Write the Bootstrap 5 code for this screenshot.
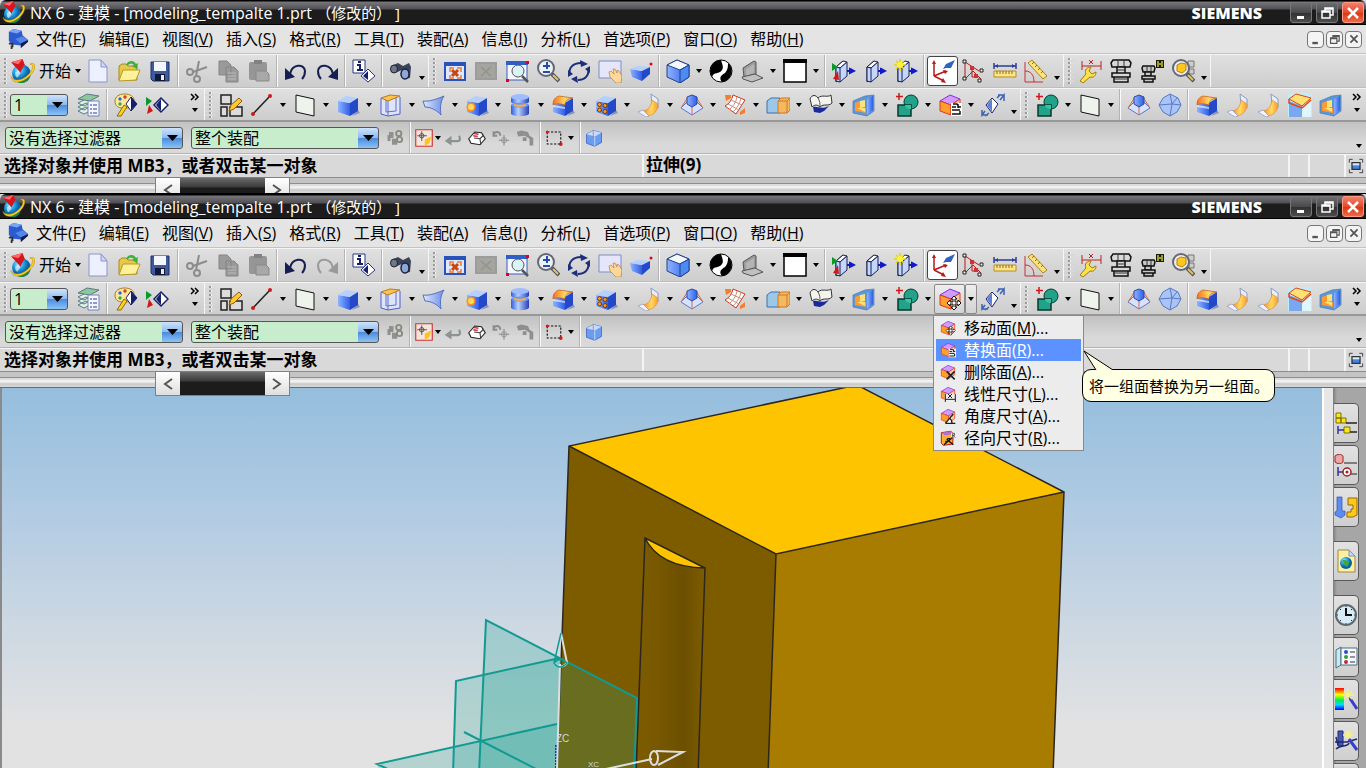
<!DOCTYPE html>
<html lang="zh-CN">
<head>
<meta charset="utf-8">
<meta name="viewport" content="width=device-width, initial-scale=1">
<title>NX 6 - 建模</title>
<link rel="stylesheet" href="https://cdn.jsdelivr.net/npm/bootstrap@5.3.0/dist/css/bootstrap.min.css">
<style>
body{font:16px/20px "Open Sans","Noto Sans CJK SC",sans-serif;color:#000;background:#d6d6d6;overflow-x:hidden}
button{font:inherit;color:inherit;border:0;background:none;padding:0}
.titlebar{height:25px;padding:0 2px 0 2px;color:#fff;background:linear-gradient(#000 0 1px,#77777b 2px,#505054 9px,#1c1c1c 10px,#1c1c1c 24px,#000 24px);border-radius:6px 6px 0 0}
.titlebar .doc{font-size:16px;margin-left:5px}
.titlebar .doc span{font-size:15px}
.maker{font:800 16px/20px "Open Sans",sans-serif;margin-right:24px}
.winbtn{width:22px;height:21px;margin-left:4px;border:1px solid #77777a;border-radius:3px;background:linear-gradient(#6c6c70,#4a4a4c 50%,#303032 51%,#4c4c4c)}
.winbtn.shut{border-color:#ff9a86;background:linear-gradient(#f0806a,#e4492c 50%,#d8350f 51%,#ee6a46)}
.menubar{height:29px;padding-left:7px;background:#e4e4e4;border-bottom:1px solid #c2c2c2}
.menubar a{color:#000;text-decoration:none;padding:0 6px 0 7px;white-space:nowrap}
.mdi{width:17px;height:17px;margin-left:2px;border:1px solid #777;border-radius:4px;background:#f4f4f4;color:#555}
.grip{width:10px;height:26px;flex:none;background:linear-gradient(transparent 50%,#d8d8d8 50%) 0 0/10px 4px,linear-gradient(90deg,transparent 4px,#9a9a9a 4px 6px,#f4f4f4 6px 7px,transparent 7px)}
.tools{height:34px;border-top:1px solid #f4f4f4;border-bottom:1px solid #bdbdbd;background:linear-gradient(#e0e0e0,#cdcdcd)}
.tools.second{border-bottom:2px solid #989898}
.tgroup{height:100%;flex:none}
.tgroup.ends{border-right:1px solid #f6f6f6}
.tb{width:31px;height:30px;flex:none}
.tb svg{display:block}
.tb.on{background:#fff;border:1px solid #444;border-radius:3px}
.tb.hot,.dd.hot{border:1px solid #8a8a8a;border-radius:2px;background:linear-gradient(#eee,#d2d2d2)}
.dd,.more{width:12px;height:30px;flex:none}
.more{padding-top:14px}
.rule{width:2px;height:100%;margin:0 2px;flex:none;background:linear-gradient(90deg,#b4b4b4 50%,#fafafa 50%)}
.starter{width:72px;white-space:nowrap}
.combo{height:22px;padding:0 24px 0 3px;border:1px solid #555;border-radius:3px;font:inherit;line-height:18px;color:#000;appearance:none;
 background:url("data:image/svg+xml,%3Csvg xmlns='http://www.w3.org/2000/svg' width='20' height='20'%3E%3Cpath d='M5 7h11l-5.500 6z'/%3E%3C/svg%3E") right 0 top 0/20px 20px no-repeat,linear-gradient(#cfe3fa,#8ab9ee 50%,#4a8ade 51%,#8cc4f6) right/20px 100% no-repeat,#c7edcc}
.combo.layer{width:58px;margin-right:5px}
.combo.filter{width:178px;margin:0 8px 0 5px}
.combo.scope{width:188px;margin-right:4px}
.overspace{margin-left:18px}
.selbar{height:32px;background:linear-gradient(#c2c2c2,#d9d9d9 70%);border-bottom:1px solid #b4b4b4}
.tb.mini{width:22px}.tb.mid{width:24px}
.dd.tight{width:6px}
.prompt{height:23px;font-weight:700;font-size:17px;border-top:1px solid #f6f6f6;background:#d9d9d9}
.prompt .cue{width:47%;padding-left:4px;white-space:nowrap}
.prompt .state{border-left:2px solid #f4f4f4;padding-left:2px}
.prompt .cell{border-left:2px solid #f4f4f4;height:100%}
.c20{width:20px}.c36{width:36px}.c22{width:22px}
.dock{height:16px;border-top:1px solid #8c8c8c;background:linear-gradient(#c4c4c4 0 5px,#8e8e8e 5px 6px,#dcdcdc 6px 8px,#f0f0f0 8px 10px,#c4c4c4 12px,#d4d4d4 13px);position:relative}
.dock .pager{position:absolute;left:155px;top:-1px;width:135px;height:25px;z-index:2;border:1px solid #808080;background:#1c1c1c}
.pager .track{background:linear-gradient(#6a6a6a,#3a3a3a 9px,#1c1c1c 10px)}
.pager button{width:24px;height:23px;background:linear-gradient(#fff,#dedede)}
.nxwin.back{height:194px;overflow:hidden;border-bottom:1px solid #000}
.edge{border-top:1px solid #6c6c6c}
.facemenu{display:block;width:151px;left:-1px;top:31px;padding:1px 2px;border:1px solid #8a8a8a;border-radius:0;background:#ececec;color:#000;font-size:16px;z-index:5;min-width:0}
.facemenu .dropdown-item{height:22px;padding:0 4px;color:#000;line-height:22px;font-size:16px}
.facemenu .dropdown-item.active{background:#5b92ff;color:#fff}
.tip{left:1082px;top:349px;width:193px;z-index:6}
.tip svg{display:block;margin-bottom:-1px}
.tip .bubble{height:33px;padding:0 6px;font-size:15px;line-height:32px;border:1px solid #000;border-radius:9px;background:#ffffe4;white-space:nowrap}
.tip .tail{position:relative;z-index:1}
.scene{border-left:2px solid #8a8a8a;background:linear-gradient(#95bedd,#b3cce3 35%,#cfd9e2 65%,#e2e2e2 90%);min-width:0}
.splitter{width:11px;border-left:2px solid #fff;background:#e6e6e6;flex:none}
.sidebar{width:33px;flex:none;background:linear-gradient(90deg,#7c7c7c,#a6a6a6 4px);padding:15px 7px 0 1px;gap:2px;overflow:hidden}
.sidebar button{height:40px;flex:none;border:1px solid #5a5a5a;border-left:0;border-radius:0 5px 5px 0;background:linear-gradient(#e2e2e2,#cfcfcf)}
.sidebar .gap-above{margin-top:12px}
.sidebar button:last-child{height:auto;flex:1 1 0;min-height:0;border-bottom:0;border-radius:0 5px 0 0;padding:0}
</style>
</head>
<body>
<svg width="0" height="0" class="position-absolute" aria-hidden="true">
<defs>
<linearGradient id="gb"><stop stop-color="#8db4ff"/><stop offset="1" stop-color="#2f5ee6"/></linearGradient>
<linearGradient id="gc"><stop stop-color="#2f5ee0"/><stop offset=".4" stop-color="#b8d2ff"/><stop offset="1" stop-color="#2440b8"/></linearGradient>
<linearGradient id="go"><stop stop-color="#ff6a20"/><stop offset=".6" stop-color="#ffdc60"/><stop offset="1" stop-color="#ff9a30"/></linearGradient>
<linearGradient id="gs"><stop stop-color="#dfe8ff"/><stop offset="1" stop-color="#6b8de8"/></linearGradient>
<radialGradient id="gg" cx=".35" cy=".3"><stop stop-color="#b4f2ff"/><stop offset=".5" stop-color="#2aa8ea"/><stop offset="1" stop-color="#0b62a8"/></radialGradient>
<linearGradient id="rain" x2="0" y2="1"><stop stop-color="red"/><stop offset=".3" stop-color="#ff0"/><stop offset=".55" stop-color="#0e4"/><stop offset=".75" stop-color="#0df"/><stop offset="1" stop-color="#00f"/></linearGradient>
<linearGradient id="slot"><stop stop-color="#7d5c00"/><stop offset=".3" stop-color="#785800"/><stop offset=".7" stop-color="#6c5000"/><stop offset="1" stop-color="#7d5c00"/></linearGradient>
<g id="cb"><path d="M16 23l8-3-2-3z" fill="#8a97b8"/><path d="M2 8l12 2v13L2 19z" fill="url(#gb)"/><path d="M2 8l8-5 12 2-8 5z" fill="#b4d0ff"/><path d="M14 10l8-5v13l-8 5z" fill="#2449c8"/></g>
<g id="door"><path d="M4 8l7-6v15l-7 6z" fill="#a9c2ff" stroke="#16204a"/><path d="M4 8l7-6 4 1-7 6z" fill="#fff" stroke="#16204a"/><path d="M8 9l7-6v14l-7 6-4-1V8z" fill="#c4d6ff" stroke="#16204a"/><path d="M8 9v14" stroke="#16204a"/><path d="M15 12h5m-2-2l4 2-4 2z" fill="#1018c8" stroke="#1018c8" stroke-width="2"/></g>
<g id="mfc"><path d="M2 8l10-6 10 4-9 6z" fill="#cf9cff" stroke="#8a2be2"/><path d="M2 8l11 4v10L2 18z" fill="#ffa02a" stroke="#e0361c"/><path d="M13 12l9-6v10l-9 6z" fill="#ffc9a0" stroke="#e0361c"/></g>
<g id="lens"><circle cx="10" cy="9" r="8" fill="#e9f1f4" stroke="#667" stroke-width="2"/><path d="M16 15l7 7" stroke="#555" stroke-width="4"/><path d="M17 16l5 5" stroke="#ddc46a" stroke-width="2"/></g>
</defs>
<symbol id="nx" viewBox="0 0 24 24"><circle cx="11" cy="14" r="9" fill="url(#gg)"/><path d="M3 19c4 5 12 6 16-1-5 3-11 3-16 1z" fill="#1c8a3c"/><path d="M1 17c3 6 14 3 19-5 3-5 2-7-1-7 6-3 6 4 2 9-6 8-18 12-20 3z" fill="#ffd21c" stroke="#b88400" stroke-width=".5"/><path d="M1 3l11-3 2 5-4 8z" fill="#d8141c"/><path d="M1 3l11-3-4 5z" fill="#ff6a6a"/><path d="M5 13l3-2 2 3-3 4c-2-1-2-3-2-5z" fill="#fff" opacity=".6"/></symbol>
<symbol id="part" viewBox="0 0 24 24"><path d="M2 4l5-3 9 2 1 5 6 5-8 6-10-1-3-4z" fill="#2a5bd0"/><path d="M2 4l5-3 9 2-5 3z" fill="#7aa4f4"/><path d="M9 12l8-3 6 4-8 4z" fill="#5686e8"/><path d="M23 13v2l-8 7v-5z" fill="#101c44"/><path d="M2 17h4v3H5v3" fill="none" stroke="#333" stroke-width="2"/></symbol>
<symbol id="new" viewBox="0 0 24 24"><path d="M3 1h12l6 7v15H3z" fill="#edf0ff" stroke="#8a96cc"/><path d="M15 1v7h6z" fill="#cfd6fa" stroke="#8a96cc"/></symbol>
<symbol id="open" viewBox="0 0 24 24"><path d="M2 7l3-2h4l2 2h9v14H2z" fill="#e8c848" stroke="#a88a20"/><path d="M2 22l4-11h17l-4 10z" fill="#fff19a" stroke="#b89a28"/><path d="M9 6c2-5 8-5 10-1l2-1-1 6-5-3 2-1c-2-2-4-2-6 0z" fill="#3fae3a"/></symbol>
<symbol id="save" viewBox="0 0 24 24"><path d="M3 3h18v19H5l-2-2z" fill="#3c5a9c" stroke="#1e2f66"/><path d="M6 3h12v9H6z" fill="#f4f6ff"/><path d="M7 15h10v7H7z" fill="#11183a"/><path d="M13 16h3v5h-3z" fill="#e8ecff"/></symbol>
<symbol id="cut" viewBox="0 0 24 24"><g fill="none" stroke="#8c8c8c" stroke-width="2"><circle cx="5" cy="13" r="3"/><circle cx="12" cy="20" r="3"/><path d="M8 13l14-5M11 17l3-15"/></g></symbol>
<symbol id="copy" viewBox="0 0 24 24"><path d="M3 2h8l4 4v10H3zM10 8h8l4 4v11H10z" fill="#9a9a9a" stroke="#858585"/><path d="M12 14h8M12 17h8M12 20h8" stroke="#bbb"/></symbol>
<symbol id="paste" viewBox="0 0 24 24"><rect x="2" y="3" width="18" height="18" rx="2" fill="#969696"/><path d="M7 1h8v4H7z" fill="#828282"/><path d="M9 12h10l3 3v7H9z" fill="#a8a8a8" stroke="#888"/></symbol>
<symbol id="undo" viewBox="0 0 24 24"><path d="M6 15c2-10 14-11 15-3 0 3-1 6-3 8" fill="none" stroke="#171e52" stroke-width="2"/><path d="M1 9v12l10-3z" fill="#171e52"/></symbol>
<symbol id="redo" viewBox="0 0 24 24"><path d="M18 15C16 5 4 4 3 12c0 3 1 6 3 8" fill="none" stroke="#171e52" stroke-width="2"/><path d="M23 9v12l-10-3z" fill="#171e52"/></symbol>
<symbol id="redog" viewBox="0 0 24 24"><path d="M18 15C16 5 4 4 3 12c0 3 1 6 3 8" fill="none" stroke="#9a9a9a" stroke-width="2"/><path d="M23 9v12l-10-3z" fill="#9a9a9a"/></symbol>
<symbol id="info" viewBox="0 0 24 24"><path d="M1 1h12v13H1z" fill="#fff" stroke="#2a3480"/><path d="M5 6h3v5m-3 0h6M6 3h3" fill="none" stroke="#16206a" stroke-width="2"/><path d="M16 10l7 7-7 6-7-6z" fill="#fff" stroke="#2a3480"/><path d="M16 12v9l-5-4z" fill="#16206a"/></symbol>
<symbol id="binoc" viewBox="0 0 24 24"><path d="M2 7l7-3 5 3 6-3 2 4-1 11-6 1-2-9-7 3-4-2z" fill="#3a4358"/><ellipse cx="5" cy="10" rx="3.500" ry="4" fill="#6d7890" stroke="#222"/><ellipse cx="16" cy="15" rx="4" ry="5" fill="#8fa6d8" stroke="#1a2240" stroke-width="1.500"/></symbol>
<symbol id="fit" viewBox="0 0 24 24"><path d="M2 4h20v17H2z" fill="#dfe8ff" stroke="#2a52b8" stroke-width="2"/><path d="M1 3h22v4H1z" fill="#2a52b8"/><path d="M9 11l6 6m0-6l-6 6" stroke="#c8460a" stroke-width="3"/><path d="M7 13V9h4m3 0h4v4m0 3v3h-4m-3 0H7v-3" fill="none" stroke="#f07a30" stroke-width="1.500"/></symbol>
<symbol id="fitg" viewBox="0 0 24 24"><path d="M1 3h22v18H1z" fill="#9c9c9c"/><path d="M3 5h18v14H3z" fill="#a4a4a0"/><path d="M7 8l10 9m0-9L7 17" stroke="#94948a" stroke-width="1.500"/></symbol>
<symbol id="zoomw" viewBox="0 0 24 24"><path d="M2 3h20v18H2z" fill="#f4f7ff" stroke="#3a5cb8"/><path d="M1 2h22v4H1z" fill="#2f5ec8"/><circle cx="13" cy="12" r="6" fill="#d9f3f6" stroke="#555"/><path d="M17 17l6 6" stroke="#555" stroke-width="2.500"/><path d="M1 20h3v3H1zM21 2h3v3h-3z" fill="#d02"/></symbol>
<symbol id="zoompm" viewBox="0 0 24 24"><use href="#lens"/><path d="M7 7h7m-3-4v7m-4 3h7" stroke="#2a4aa8" stroke-width="2"/></symbol>
<symbol id="rotate" viewBox="0 0 24 24"><path d="M3 16C1 9 6 4 14 4M21 9c2 7-3 12-10 12" fill="none" stroke="#1d2e7c" stroke-width="2"/><path d="M13 1l8 4-7 3zM11 24l-7-4 6-3z" fill="#1d2e7c"/><path d="M1 11l0 7 5-3zM23 14l0-7-5 3z" fill="#1d2e7c"/></symbol>
<symbol id="pan" viewBox="0 0 24 24"><path d="M1 2h22v17H1z" fill="#e6e6fa" stroke="#7d8ccc"/><path d="M11 13l2-1 3 3-1-5h2l2 4v-3l2 1 3 5-1 7h-5l-6-6z" fill="#ffd79a" stroke="#b8803a" stroke-width=".7"/></symbol>
<symbol id="persp" viewBox="0 0 24 24"><path d="M1 10l12 2v10L3 18z" fill="url(#gb)"/><path d="M1 10l8-3 12 1-8 4z" fill="#b4d0ff"/><path d="M13 12l8-4v7l-8 7z" fill="#2449c8"/><circle cx="22" cy="5" r="1.500" fill="#d02"/></symbol>
<symbol id="shaded" viewBox="0 0 24 24"><path d="M1 6L11 1l12 5v12l-9 6L1 18z" fill="url(#gb)" stroke="#24408c"/><path d="M1 6L11 1l12 5-9 5z" fill="#f4f8ff" stroke="#24408c"/><path d="M14 11l9-5v12l-9 6z" fill="#4a8cf4" stroke="#24408c"/></symbol>
<symbol id="yin" viewBox="0 0 24 24"><circle cx="12" cy="12" r="11" fill="#fff" stroke="#000"/><path d="M12 1a11 11 0 0 0-9 17c2-6 7-2 10-7 2-3 0-6-1-10z"/><path d="M13 23c-4-5 0-7 3-9 3-3 3-7 3-10a11 11 0 0 1-6 19z"/></symbol>
<symbol id="laptop" viewBox="0 0 24 24"><path d="M3 9l11-7 2 1v12L4 18z" fill="#9c9c9c" stroke="#555"/><path d="M6 10l8-5v9l-8 3z" fill="#b4b4b4"/><path d="M2 18l13-3 8 4-11 4-9-3z" fill="#c0c0c0" stroke="#555"/></symbol>
<symbol id="bgbox" viewBox="0 0 24 24"><path d="M1 1h22v22H1z" fill="#fff" stroke="#000" stroke-width="1.500"/><path d="M0 0h24v4H0z"/></symbol>
<symbol id="clipa" viewBox="0 0 24 24"><use href="#door"/><path d="M0 4l6 4-6 4z" fill="#0a9a28"/><path d="M1 20l5-8 1 9z" fill="#d01818"/></symbol>
<symbol id="clipb" viewBox="0 0 24 24"><use href="#door"/></symbol>
<symbol id="clipc" viewBox="0 0 24 24"><use href="#door"/><path d="M6 0v12M0 6h12M2 2l8 8m0-8l-8 8" stroke="#e8d400" stroke-width="1.500"/><circle cx="6" cy="6" r="3" fill="#fff23a"/></symbol>
<symbol id="wcs" viewBox="0 0 24 24"><path d="M3 4v13m0 0l12-5M3 17l10 5" fill="none" stroke="#b81818" stroke-width="1.500"/><path d="M3 1l-2 4h4zM17 12l-5-1 2 4zM15 24l-5-1 2-4z" fill="#b81818"/><path d="M12 10l3-5 9-4-4 8-5 0z" fill="#2f63c0"/></symbol>
<symbol id="asm" viewBox="0 0 24 24"><path d="M3 2v19M3 3l14 9M3 20l8-8 8 8M10 8v10h6" fill="none" stroke="#b81818"/><path d="M8 7h4v4H8zM12 15h4v4h-4z" fill="#c33"/><g fill="#eee" stroke="#222"><path d="M1 1h3v3H1zM1 18h3v3H1zM18 10h3v3h-3zM16 20h3v3h-3z"/></g></symbol>
<symbol id="ruler" viewBox="0 0 24 24"><path d="M1 7h22M1 4v6M23 4v6" stroke="#2a3c9c" stroke-width="1.500"/><path d="M5 5L2 7l3 2zM19 5l3 2-3 2z" fill="#2a3c9c"/><path d="M1 12h22v6H1z" fill="#ffe68a" stroke="#b88c20"/><path d="M4 12v3m3-3v3m3-3v3m3-3v3m3-3v3m3-3v3" stroke="#8a6a10"/></symbol>
<symbol id="angle" viewBox="0 0 24 24"><path d="M1 3v20h18M1 12c6 0 9 4 9 11" fill="none" stroke="#c83030"/><path d="M4 4l4-3 15 16-4 3z" fill="#ffe27a" stroke="#a88420"/><path d="M8 5l2-2m1 5l2-2m1 5l2-2m1 5l2-2" stroke="#8a6a10"/></symbol>
<symbol id="wrench" viewBox="0 0 24 24"><path d="M4 7h19M4 2v9M23 2v9M11 1l4 4m0-4l-4 4" stroke="#c02020"/><path d="M2 22l6-7c-2-4 1-7 5-7l-2 4 3 3 4-2c0 4-3 6-6 5l-7 6z" fill="#ffe14a" stroke="#9c7c10"/></symbol>
<symbol id="bolt" viewBox="0 0 24 24"><g fill="#d8d8d8" stroke="#111" stroke-width="1.500"><path d="M4 1h16l2 3-1 4H3L2 4z"/><path d="M8 8h8v7H8z"/><path d="M3 14h18v4H3zM5 18h14v5H5z"/></g><path d="M9 1v7m6-7v7M8 11h8M5 20h14" stroke="#333"/></symbol>
<symbol id="bolth" viewBox="0 0 24 24"><g fill="#c8c8c8" stroke="#111" stroke-width="1.500"><path d="M3 7h11l1 2-1 4H3L2 9z"/><path d="M5 13h6v4H5z"/><path d="M2 17h13v3H2zM4 20h9v3H4z"/></g><path d="M7 7v6m4-6v6" stroke="#333"/><path d="M16 1h8v8h-8z" fill="#1c1c00"/><path d="M17 2h2v2h2V2h2v6h-2V6h-2v2h-2z" fill="#9c9c30"/></symbol>
<symbol id="reuse" viewBox="0 0 24 24"><path d="M17 2h6v6h-6zM18 10h5v5h-5z" fill="#ccc" stroke="#777"/><use href="#lens"/><path d="M6 6l4-2 5 1v6l-4 3-5-2z" fill="#ffc820" stroke="#c08000"/></symbol>
<symbol id="layers" viewBox="0 0 24 24"><g fill="#dff3e4" stroke="#5a7a86"><path d="M1 18l8-4 6 3-8 4zM1 14l8-4 6 3-8 4zM1 10l8-4 6 3-8 4z"/><path d="M1 6l9-5 12 2-9 5z" fill="#8cc89a"/></g><path d="M11 8h11v15H11z" fill="#f4f6ff" stroke="#7684b8"/><path d="M13 12h2m1 0h4m-7 4h2m1 0h4m-7 4h2m1 0h4" stroke="#6a7cc0" stroke-width="1.500"/></symbol>
<symbol id="palette" viewBox="0 0 24 24"><path d="M1 8c0-9 17-9 19-2 0 4-6 2-6 5 2 4-2 5-5 4-5 0-8-2-8-7z" fill="#ffe89a" stroke="#a87a20"/><circle cx="6" cy="6" r="1.700" fill="#2a6ad8"/><circle cx="11" cy="4" r="1.700" fill="#d83a2a"/><circle cx="6" cy="11" r="1.700" fill="#3aa84a"/><path d="M3 23l7-11 3 2-6 9z" fill="#ffd21c" stroke="#8a6a10"/><path d="M17 4l6 7-6 7-5-7z" fill="#fff" stroke="#16206a"/><path d="M17 4v14l6-7z" fill="#16206a"/></symbol>
<symbol id="flip" viewBox="0 0 24 24"><path d="M1 4l6 4-6 5z" fill="#0a9a28"/><path d="M2 21l2-9 4 6z" fill="#d01818"/><path d="M16 5l7 7-7 7-7-7z" fill="#fff" stroke="#16206a" stroke-width="1.500"/><path d="M16 6v12l-5-6z" fill="#16206a"/></symbol>
<symbol id="sketch" viewBox="0 0 24 24"><path d="M2 2h10v9H2zM2 14h6v9H2zM11 14h12v9H11z" fill="#dcdcdc" stroke="#222" stroke-width="1.500"/><path d="M10 18l2-6 8-7 3 3-8 8z" fill="#ffca28" stroke="#8a5a10"/></symbol>
<symbol id="line" viewBox="0 0 24 24"><path d="M3 21L20 3" stroke="#222" stroke-width="1.500"/><circle cx="3" cy="21" r="2" fill="#d01818"/><circle cx="20" cy="3" r="2" fill="#d01818"/></symbol>
<symbol id="datum" viewBox="0 0 24 24"><path d="M3 2l18 4v17L3 19z" fill="#eef4ec" stroke="#111"/></symbol>
<symbol id="cube" viewBox="0 0 24 24"><use href="#cb"/></symbol>
<symbol id="extr" viewBox="0 0 24 24"><path d="M2 5v16l7 2 12-2V4" fill="#dfe4fa" stroke="#4a62c8"/><path d="M9 8v15M7 5v14l10-1V3" fill="none" stroke="#5a72cc"/><path d="M2 5l9-3 10 1-12 5z" fill="#ffc24a" stroke="#b87a20"/></symbol>
<symbol id="sheet" viewBox="0 0 24 24"><path d="M1 8c6 1 14-2 21-5-4 6-4 13-3 19-4-5-11-8-16-8z" fill="url(#gs)" stroke="#5470c0"/></symbol>
<symbol id="hole" viewBox="0 0 24 24"><use href="#cb"/><circle cx="6" cy="14" r="4.500" fill="#ff8a20"/><circle cx="6" cy="14" r="3" fill="#ffdc5a"/></symbol>
<symbol id="cyl" viewBox="0 0 24 24"><path d="M3 4v5c2 3 16 3 18 0V4zM3 12v9c3 3 15 3 18 0v-9z" fill="url(#gc)"/><ellipse cx="12" cy="4" rx="9" ry="3" fill="#9fbcff"/><ellipse cx="12" cy="12" rx="9" ry="2.500" fill="#6f94f4"/><path d="M6 11c3 1 9 1 12 0v2c-3 1-9 1-12 0z" fill="#ffb030"/></symbol>
<symbol id="blend" viewBox="0 0 24 24"><use href="#cb"/><path d="M2 12c0-6 3-8 6-9l14 2c-6 1-8 3-8 7-3-1-9-2-12 0z" fill="url(#go)" stroke="#c06010" stroke-width=".7"/><path d="M2 12l12 2v2L2 14z" fill="#fff" opacity=".6"/></symbol>
<symbol id="pattern" viewBox="0 0 24 24"><use href="#cb"/><g fill="#ff9a20" stroke="#7a3800"><circle cx="5.500" cy="11.500" r="2"/><circle cx="11" cy="12.500" r="2"/><circle cx="5.500" cy="17" r="2"/><circle cx="11" cy="18.500" r="2"/></g></symbol>
<symbol id="bend" viewBox="0 0 24 24"><path d="M14 1l7 5v9l-6-3z" fill="#e8eefc" stroke="#8a9ac8"/><path d="M4 18c6 0 10-3 11-11l6 4c0 7-4 11-11 12z" fill="url(#go)" stroke="#d89040" stroke-width=".7"/><path d="M1 19l5-2 6 6-3 1z" fill="#eef2ff" stroke="#8a9ac8" stroke-width=".7"/></symbol>
<symbol id="draft" viewBox="0 0 24 24"><path d="M1 15l6-6h10l6 6-11 7z" fill="#d6e2ff" stroke="#5a78c8"/><path d="M1 15L8 4M23 15L16 4M12 22V12" stroke="#e0683a"/><path d="M7 4l5-2 5 2v7l-5 3-5-3z" fill="url(#gb)" stroke="#2a48a8"/></symbol>
<symbol id="mesh" viewBox="0 0 24 24"><path d="M10 2l12 5-9 14L2 13c4-2 7-6 8-11z" fill="#fff" stroke="#c83820"/><path d="M14 4c-1 6-4 9-8 13M18 5c-1 6-4 10-8 14M8 7l11 5M5 11l11 6" fill="none" stroke="#c89080"/><path d="M2 2h6v3L3 8zM17 19l5-4v5l-5 2z" fill="#f08030"/></symbol>
<symbol id="trim" viewBox="0 0 24 24"><path d="M1 8l4-3h9v15H1z" fill="#9cc8e8" stroke="#3a72b0"/><path d="M12 8l3-3h9v12l-3 3h-9z" fill="#f4b860" stroke="#d07820"/><path d="M12 8h9v12M21 8l3-3" fill="none" stroke="#d07820"/></symbol>
<symbol id="sew" viewBox="0 0 24 24"><path d="M1 6c2-5 6-4 8-1 4-4 9 0 13-3l1 8c-4 4-8 0-12 4-3-3-6-2-8 0z" fill="#f4f4ee" stroke="#333"/><path d="M4 14c5-1 8 3 16-1l-5 5-4 2-6-1z" fill="#1a2a9c"/><path d="M9 5c2 3 2 6 2 9" fill="none" stroke="#555"/></symbol>
<symbol id="shell" viewBox="0 0 24 24"><path d="M1 8l12-5 9-1v16l-7 5-14-3z" fill="#5a98d8" stroke="#4a78b0" stroke-width=".7"/><path d="M3 10l5-2v6l6 1v5L3 18z" fill="#ff9a30"/><path d="M8 8l5-1v7l-5 1zM5 15h8v4z" fill="#ffe27a"/><path d="M15 6l6-3v14l-6 5z" fill="url(#gb)"/></symbol>
<symbol id="union" viewBox="0 0 24 24"><circle cx="16" cy="9" r="7" fill="#22a288" stroke="#063a2e"/><path d="M3 12h13v11H3z" fill="#22a288" stroke="#063a2e" stroke-width="1.500"/><path d="M10 12h6v4c-4 0-6-2-6-4z" fill="#3ac0a4"/><path d="M4 0v7M1 3.500h7" stroke="#d01818" stroke-width="1.500"/></symbol>
<symbol id="facer" viewBox="0 0 24 24"><use href="#mfc"/><path d="M13 10h11v13H13z" fill="#fff"/><path d="M15 11h4l2 3h2M14 14h4m-4 3h8m-8 4h8v-3M20 11v4" stroke="#111" stroke-width="1.500" fill="none"/></symbol>
<symbol id="facem" viewBox="0 0 24 24"><use href="#mfc"/><path d="M16 9l3 3h-2v3h3v-2l3 3-3 3v-2h-3v3h2l-3 3-3-3h2v-3h-3v2l-3-3 3-3v2h3v-3h-2z" fill="#fff" stroke="#111"/></symbol>
<symbol id="faced" viewBox="0 0 24 24"><use href="#mfc"/><path d="M10 11l12 12m0-12L10 23" stroke="#222" stroke-width="2.500"/></symbol>
<symbol id="facel" viewBox="0 0 24 24"><use href="#mfc"/><path d="M7 12h17v12H7z" fill="#eee"/><path d="M8 12v12M23 12v12M8 20h15M12 12l6 6m0-6l-6 6" stroke="#222" stroke-width="1.500"/></symbol>
<symbol id="facea" viewBox="0 0 24 24"><use href="#mfc"/><path d="M8 23l10-12v12z" fill="#fff"/><path d="M8 23h15M8 23L20 9m-2 14c0-5-2-7-4-8" fill="none" stroke="#222" stroke-width="2"/></symbol>
<symbol id="facerad" viewBox="0 0 24 24"><path d="M2 4l14-2 4 3-1 16-14 2-3-3z" fill="#f4b03a" stroke="#c01818" stroke-width="1.500"/><path d="M3 4l13-2 4 4-13 2z" fill="#b070d8"/><path d="M6 22l13-11m-9 3l10 8M11 13h4m-6 3v4" stroke="#111" stroke-width="2"/><path d="M17 4h7v7h-7z" fill="#fff"/><path d="M19 11V5h3v3h-3l4 3" fill="none" stroke="#111"/></symbol>
<symbol id="resize" viewBox="0 0 24 24"><path d="M11 5l6 6-6 9-6-8z" fill="#fff" stroke="#16206a"/><path d="M11 6v13l-5-7z" fill="#5a80d8"/><path d="M16 5l3-3m0 5l4-5v6m0-6h-6M8 20l-4 3m0-5l-3 4v-5m0 5h6" fill="none" stroke="#3a62b8" stroke-width="1.500"/></symbol>
<symbol id="sphere" viewBox="0 0 24 24"><path d="M12 1l8 4 3 7-4 7-7 4-7-4-4-7 4-7z" fill="#a9c4f8" stroke="#5a78c0"/><path d="M12 1l2 10-2 12M1 12l13-1 9 1M14 11l5-6" fill="none" stroke="#5a78c0"/></symbol>
<symbol id="chamf" viewBox="0 0 24 24"><path d="M0 0h24v24H0z" fill="#c0ecf8"/><path d="M1 8l13 5v11H1z" fill="#7aa8f0"/><path d="M14 13l9-7v18h-9z" fill="#dff6ff"/><path d="M1 6l7-5 15 4-9 8z" fill="#ffe070" stroke="#e0461a"/><path d="M1 6v4l13 5 9-8" fill="none" stroke="#e0461a" stroke-width="1.500"/></symbol>
<symbol id="gchain" viewBox="0 0 24 24"><path d="M4 4h6v8H4zM8 13h7v8H8zM2 8h4v8H2z" fill="#909090"/><circle cx="17" cy="6" r="3.500" fill="none" stroke="#8a8a80" stroke-width="2.500"/><circle cx="18" cy="14" r="3.500" fill="none" stroke="#8a8a80" stroke-width="2.500"/></symbol>
<symbol id="snap" viewBox="0 0 24 24"><path d="M1 1h22v22H1z" fill="#f4e6dc" stroke="#d03030" stroke-width="1.500"/><path d="M9 3v13M3 9h13" stroke="#333"/><circle cx="9" cy="9" r="3" fill="none" stroke="#333"/><path d="M13 14l9-4-3 9-6 4z" fill="#ffc020"/></symbol>
<symbol id="gret" viewBox="0 0 24 24"><path d="M6 16h12c4 0 4-4 2-7" fill="none" stroke="#8c9490" stroke-width="3"/><path d="M10 9v13l-9-6z" fill="#8c9490"/></symbol>
<symbol id="eraser" viewBox="0 0 24 24"><path d="M1 13l8-9 9 1 5 8-7 8-12-2z" fill="#fff" stroke="#222" stroke-width="1.500"/><path d="M8 12l8 1 1 8M16 13l5-5" fill="none" stroke="#444" stroke-width="1.500"/><path d="M8 6l6 1M7 9l6 1" stroke="#d83040" stroke-width="2"/></symbol>
<symbol id="gcur" viewBox="0 0 24 24"><path d="M2 8c2-6 9-5 9 1M2 3v6h5" fill="none" stroke="#8c8c8c" stroke-width="2.500"/><path d="M16 8v14M9 15h14" stroke="#8c8c8c" stroke-width="1.500"/><circle cx="16" cy="15" r="3.500" fill="none" stroke="#8c8c8c"/></symbol>
<symbol id="gtool" viewBox="0 0 24 24"><path d="M1 4l6-2 9 2 2 5 5 3v10h-5v-9l-6-4-9 1zM9 11h5v5H9z" fill="#8f8f8f"/></symbol>
<symbol id="marq" viewBox="0 0 24 24"><path d="M3 4h18v16H3z" fill="none" stroke="#111" stroke-width="1.500" stroke-dasharray="3 2"/><circle cx="3" cy="4" r="2" fill="#d01818"/><circle cx="21" cy="20" r="2.500" fill="#d01818"/></symbol>
<symbol id="bluebox" viewBox="0 0 24 24"><path d="M2 7l9-5 11 3v13l-9 5-11-4z" fill="#6a9cf0" stroke="#3a60c0"/><path d="M2 7l9-5 11 3-9 5z" fill="#c4dcff"/><path d="M13 10v13" stroke="#dbe8ff"/><path d="M11 2v9" stroke="#e06030"/></symbol>
<symbol id="full" viewBox="0 0 24 24"><path d="M6 7h12v10H6z" fill="#3f86e0" stroke="#333" stroke-width="2"/><path d="M7 8h10v3H7z" fill="#d8e8ff"/><path d="M2 7V2h5m10 0h5v5m0 10v5h-5M7 22H2v-5" fill="none" stroke="#445" stroke-width="1.500"/></symbol>
<symbol id="car" viewBox="0 0 6 4"><path d="M0 0h6L3 4z"/></symbol>
<symbol id="chev" viewBox="0 0 10 8"><path d="M1 1l3 3-3 3M5 1l3 3-3 3" fill="none" stroke="#000" stroke-width="1.500"/></symbol>
<symbol id="gmin" viewBox="0 0 14 14"><path d="M3 10h7v3H3z" fill="currentColor"/></symbol>
<symbol id="gres" viewBox="0 0 14 14"><path d="M5 5V2h8v7h-3M2 5h8v7H2zM2 6h8M5 3h8" fill="none" stroke="currentColor" stroke-width="1.500"/></symbol>
<symbol id="gx" viewBox="0 0 14 14"><path d="M2 2l10 10m0-10L2 12" stroke="currentColor" stroke-width="2.500"/></symbol>
<symbol id="s1" viewBox="0 0 24 24"><path d="M2 2h5v5H2zM2 7h5v5H2zM7 7h5v5H7zM10 16h6v6h-6z" fill="#f6e81c" stroke="#807000"/><path d="M12 12h11M16 21h7" stroke="#222" stroke-width="1.500"/><path d="M4 15v8m0-4h6" stroke="#33a" stroke-width="1.500"/></symbol>
<symbol id="s2" viewBox="0 0 24 24"><path d="M1 3c2-2 7-2 8 0v6c-1 2-6 2-8 0z" fill="#e8a8a8" stroke="#a02020"/><path d="M10 10h13M16 21h7" stroke="#222"/><path d="M4 14v9m0-4h5" stroke="#33a" stroke-width="1.500"/><circle cx="13" cy="19" r="4" fill="#fff" stroke="#a02020" stroke-width="1.500"/><circle cx="13" cy="19" r="1.500" fill="#a02020"/></symbol>
<symbol id="s3" viewBox="0 0 24 24"><path d="M3 2h5v14h3v4l-4 3-6-3v-3l2-1z" fill="#5c8cf0" stroke="#2a50b8" stroke-width=".7"/><path d="M14 3h9v17l-4 2h-6v-5h4v-3h2v-4h-5z" fill="#ffc81c" stroke="#946800"/></symbol>
<symbol id="s4" viewBox="0 0 24 24"><path d="M4 1h11l6 6v16H4z" fill="#fff0a0" stroke="#988848"/><path d="M15 1v6h6z" fill="#c8d4ff" stroke="#8090c0"/><circle cx="12" cy="14" r="6" fill="url(#gg)"/><path d="M8 12c3-3 4 0 6 0s1 4-1 6c-2-1-2-3-5-6z" fill="#3fa83a"/></symbol>
<symbol id="s5" viewBox="0 0 24 24"><circle cx="12" cy="12" r="10" fill="#d6ecf8" stroke="#5c6a70" stroke-width="2"/><path d="M12 5v7h6" fill="none" stroke="#111" stroke-width="2"/><path d="M12 3v1m0 16v1M3 12h1m16 0h1M6 6l1 1m10 10l1 1M6 18l1-1M17 7l1-1" stroke="#333"/></symbol>
<symbol id="s6" viewBox="0 0 24 24"><path d="M2 5l5-3v18l-5 3z" fill="#c8e8f4" stroke="#4a7080"/><path d="M7 3h16v17H7z" fill="#f4f8ff" stroke="#4a7080"/><path d="M16 7h5m-5 5h5m-5 5h5" stroke="#333"/><circle cx="12" cy="7" r="2" fill="#2a50c8"/><circle cx="12" cy="12" r="2" fill="#3a9a3a"/><circle cx="12" cy="17" r="2" fill="#c82a3a"/></symbol>
<symbol id="s7" viewBox="0 0 24 24"><path d="M1 1h9v22H1z" fill="url(#rain)"/><path d="M15 10l8 12" stroke="#3840c8" stroke-width="3"/><path d="M14 2v11M9 8h11M10 4l8 8m0-8l-8 8" stroke="#f8f08a" stroke-width="1.500"/></symbol>
<symbol id="s8" viewBox="0 0 24 24"><path d="M4 2h5v15H4z" fill="#4858b0" stroke="#1c2870"/><path d="M1 13h12l10-3M2 20c4-4 12-2 13-6M2 8l2 8" fill="none" stroke="#1c2870" stroke-width="1.500"/><path d="M15 10l8 11" stroke="#3840c8" stroke-width="3"/><path d="M14 1v9M9 6h10M11 3l6 6m0-6l-6 6" stroke="#f8f08a" stroke-width="1.500"/></symbol>
</svg>

<main id="stage" class="d-flex flex-column"></main>

<script src="https://cdn.jsdelivr.net/npm/bootstrap@5.3.0/dist/js/bootstrap.bundle.min.js"></script>
<script>
const icon = (name, w = 24, h = w) => `<svg width="${w}" height="${h}" aria-hidden="true"><use href="#${name}"/></svg>`;
const flex = 'd-flex align-items-center justify-content-center';
const caret = (cls = '') => `<button type="button" class="dd ${cls} ${flex}" aria-label="展开">${icon('car', 6, 4)}</button>`;
const more = `<button type="button" class="more ${flex}" aria-label="工具条选项">${icon('car', 6, 4)}</button>`;
const fullMore = `<div class="d-flex flex-column align-items-center justify-content-between py-1 h-100">${icon('chev', 10, 8)}<button type="button" class="d-flex pb-1" aria-label="工具条选项">${icon('car', 6, 4)}</button></div>`;

// "|" is a rule, "v" a drop-down arrow, everything else icon=label[:class]
const tools = (list, size = 24) => list.split(' ').map(t => {
  if (t === '|') return '<span class="rule"></span>';
  if (t === 'v' || t.startsWith('v:')) return caret(t.slice(2));
  const [name, rest] = t.split('=');
  const [label, cls = ''] = rest.split(':');
  return `<button type="button" class="tb ${cls} ${flex}" aria-label="${label}">${icon(name, size)}</button>`;
}).join('');
const group = (inner, cls = 'ends') => `<div class="tgroup ${cls} d-flex align-items-center" role="toolbar"><span class="grip"></span>${inner}</div>`;

const menus = [['文件','F'],['编辑','E'],['视图','V'],['插入','S'],['格式','R'],['工具','T'],['装配','A'],['信息','I'],['分析','L'],['首选项','P'],['窗口','O'],['帮助','H']];
const faceItems = [['facem','移动面','M'],['facer','替换面','R'],['faced','删除面','A'],['facel','线性尺寸','L'],['facea','角度尺寸','A'],['facerad','径向尺寸','R']];

const faceMenu = `<div class="dropdown-menu show facemenu position-absolute">${faceItems.map(([i, t, k], n) =>
  `<button type="button" class="dropdown-item d-flex align-items-center gap-2 ${n === 1 ? 'active' : ''}">${icon(i, 16)}<span>${t}(<u>${k}</u>)...</span></button>`).join('')}</div>`;

const header = o => `
<header>
  <div class="titlebar d-flex align-items-center">
    ${icon('nx', 23)}<span class="doc text-nowrap">NX 6 - 建模 - [modeling_tempalte 1.prt <span>（修改的） ]</span></span>
    <span class="maker ms-auto">SIEMENS</span>
    <button type="button" class="winbtn ${flex}" aria-label="最小化">${icon('gmin', 14)}</button>
    <button type="button" class="winbtn ${flex}" aria-label="还原">${icon('gres', 14)}</button>
    <button type="button" class="winbtn shut ${flex}" aria-label="关闭">${icon('gx', 14)}</button>
  </div>
  <nav class="menubar d-flex align-items-center pe-1">
    ${icon('part', 22)}
    ${menus.map(([t, k]) => `<a href="#">${t}(<u>${k}</u>)</a>`).join('')}
    <span class="ms-auto d-flex">
      <button type="button" class="mdi ${flex}" aria-label="最小化文档">${icon('gmin', 11)}</button>
      <button type="button" class="mdi ${flex}" aria-label="还原文档">${icon('gres', 11)}</button>
      <button type="button" class="mdi ${flex}" aria-label="关闭文档">${icon('gx', 10)}</button>
    </span>
  </nav>
  <div class="tools d-flex">
    ${group(`<button type="button" class="starter d-flex align-items-center gap-1">${icon('nx', 25)}<span>开始</span>${icon('car', 6, 4)}</button>` +
      tools('new=新建 open=打开 save=保存 | cut=剪切 copy=复制 paste=粘贴 | undo=撤消 ' + o.redo + '=重做 | info=信息 | binoc=查找') + more)}
    ${group(tools('fit=适合窗口 fitg=适合所选 zoomw=缩放窗口 zoompm=缩放 rotate=旋转 pan=平移 persp=透视 | shaded=着色 v yin=面分析 laptop=显示 v bgbox=背景 v | clipa=编辑截面 clipb=截面 clipc=新建截面 | wcs=坐标系:on asm=约束 ruler=测量距离 angle=测量角度') + more)}
    ${group(tools('wrench=标注 bolt=螺栓 bolth=螺栓库 reuse=重用库') + more)}
  </div>
  <div class="tools second d-flex">
    ${group(`<select class="combo layer" aria-label="工作图层"><option>1</option></select>` +
      tools('layers=图层设置 | palette=对象显示 flip=反向') + `<div class="overspace pe-1 h-100">${fullMore}</div>`)}
    ${group(tools('sketch=草图 line=直线 v datum=基准平面 v cube=长方体 v extr=拉伸 v sheet=曲面 v hole=孔 v cyl=圆柱 v blend=边倒圆 v pattern=阵列 v bend=面倒圆 v draft=拔模 v mesh=网格 v trim=修剪体 v sew=缝合 v shell=抽壳 v union=求和 v') +
      `<span class="d-flex position-relative">${tools(o.menu ? 'facem=移动面:hot v:hot' : 'facer=替换面 v')}${o.menu ? faceMenu : ''}</span>` +
      tools('resize=调整') + more)}
    ${group(tools('union=求和 v datum=基准平面 v | draft=拔模 sphere=球 | blend=边倒圆 bend=面倒圆 bend=软倒圆 chamf=倒斜角 shell=抽壳'), '')}
    <div class="ms-auto pe-1">${fullMore}</div>
  </div>
  <div class="selbar d-flex align-items-center">
    <select class="combo filter" aria-label="选择过滤器"><option>没有选择过滤器</option></select>
    <select class="combo scope" aria-label="选择范围"><option>整个装配</option></select>
    ${tools('gchain=重置过滤器:mid | snap=捕捉点:mini v:tight gret=返回:mid eraser=取消选择:mid gcur=查找对象:mid gtool=导航:mid | marq=矩形选择:mini v | bluebox=实体:mini', 18)}
    <button type="button" class="ms-auto pt-3 px-1 d-flex" aria-label="工具条选项">${icon('car', 6, 4)}</button>
  </div>
  <div class="prompt d-flex align-items-center">
    <span class="cue">选择对象并使用 MB3，或者双击某一对象</span>
    <span class="state flex-grow-1 h-100">${o.state}</span>
    <span class="cell c20"></span><span class="cell c36"></span>
    <span class="cell c22 ${flex}">${icon('full', 16)}</span>
  </div>
  <div class="dock">
    <div class="pager d-flex">
      <button type="button" class="${flex}" aria-label="向左"><svg width="10" height="12" aria-hidden="true"><path d="M9 1L2 6l7 5" fill="none" stroke="#555" stroke-width="2"/></svg></button>
      <span class="track flex-grow-1"></span>
      <button type="button" class="${flex}" aria-label="向右"><svg width="10" height="12" aria-hidden="true"><path d="M1 1l7 5-7 5" fill="none" stroke="#555" stroke-width="2"/></svg></button>
    </div>
  </div>
</header>`;

const scene = `
<svg class="d-block w-100" viewBox="2 388 1320 380" role="img" aria-label="模型">
  <path d="M569 446L857 385l207 107-288 62z" fill="#ffc400"/>
  <path d="M569 446l207 108-8 220H557z" fill="#7d5c00"/>
  <path d="M776 554l288-62-11 282H768z" fill="#a87c00"/>
  <path d="M645 539q20 26 59 29l-7 206h-61z" fill="url(#slot)"/>
  <path d="M645 538l60 30q-46-1-60-30z" fill="#ffc400"/>
  <g fill="none" stroke="#2c2620" stroke-width="1.500">
    <path d="M557 774l12-328L857 385l207 107-11 282M569 446l207 108 288-62M776 554l-8 220"/>
    <path d="M636 774l9-236 60 30-7 206M645 538q14 29 60 30"/>
  </g>
  <path d="M560 660l77 38-3 76h-77z" fill="#339a70" fill-opacity=".28"/>
  <path d="M486 620l74 39-3 115h-78z" fill="#10a090" fill-opacity=".24"/>
  <path d="M456 681l104-23-3 116H453z" fill="#10a090" fill-opacity=".22"/>
  <path d="M377 764l180-40v50H380z" fill="#10a090" fill-opacity=".22"/>
  <g fill="none" stroke="#129a92" stroke-width="2">
    <path d="M479 774l7-154 151 78-3 76M453 774l3-93 104-23M390 770l-13-6 180-40M464 732l78 40"/>
  </g>
  <path d="M556 745v26" stroke="#2030c0" stroke-width="2" stroke-dasharray="2 1"/>
  <g fill="none" stroke="#dedede" stroke-width="2">
    <path d="M560 664l-3 106M561 633l6 30q-6 7-13 0M606 769l46-10M656 751l27 1-25 13"/>
    <ellipse cx="654" cy="758" rx="4" ry="7"/>
  </g>
  <path d="M561 633l-7 30q6 8 13 0-7-7-13 0" fill="none" stroke="#129a92" stroke-width="1.500"/>
  <g fill="#d8d8d8" font-family="Liberation Sans, sans-serif" font-size="10"><text x="556" y="742">ZC</text><text x="588" y="767" font-size="8">XC</text></g>
</svg>`;
const side = [['s1','装配导航器'],['s2','部件导航器'],['s3','重用库'],['s4','浏览器','gap-above'],['s5','历史记录','gap-above'],['s6','系统材料'],['s7','可视化'],['s8','系统场景']];

document.getElementById('stage').innerHTML = `
<section class="nxwin back">${header({redo: 'redo', state: '拉伸(9)', menu: false})}</section>
<section class="nxwin position-relative">
  ${header({redo: 'redog', state: '', menu: true})}
  <div class="edge d-flex">
    <div class="scene flex-grow-1">${scene}</div>
    <div class="splitter"></div>
    <aside class="sidebar d-flex flex-column">${side.map(([i, l, c = '']) => `<button type="button" class="${c} ${flex}" aria-label="${l}">${icon(i)}</button>`).join('')}<button type="button" aria-label="更多"></button></aside>
  </div>
</section>
<div class="tip position-absolute" role="tooltip">
  <svg class="tail" width="60" height="21" aria-hidden="true"><path d="M14 21L2 2l29 19" fill="#ffffe4" stroke="#000"/></svg>
  <div class="bubble">将一组面替换为另一组面。</div>
</div>`;
</script>
</body>
</html>
